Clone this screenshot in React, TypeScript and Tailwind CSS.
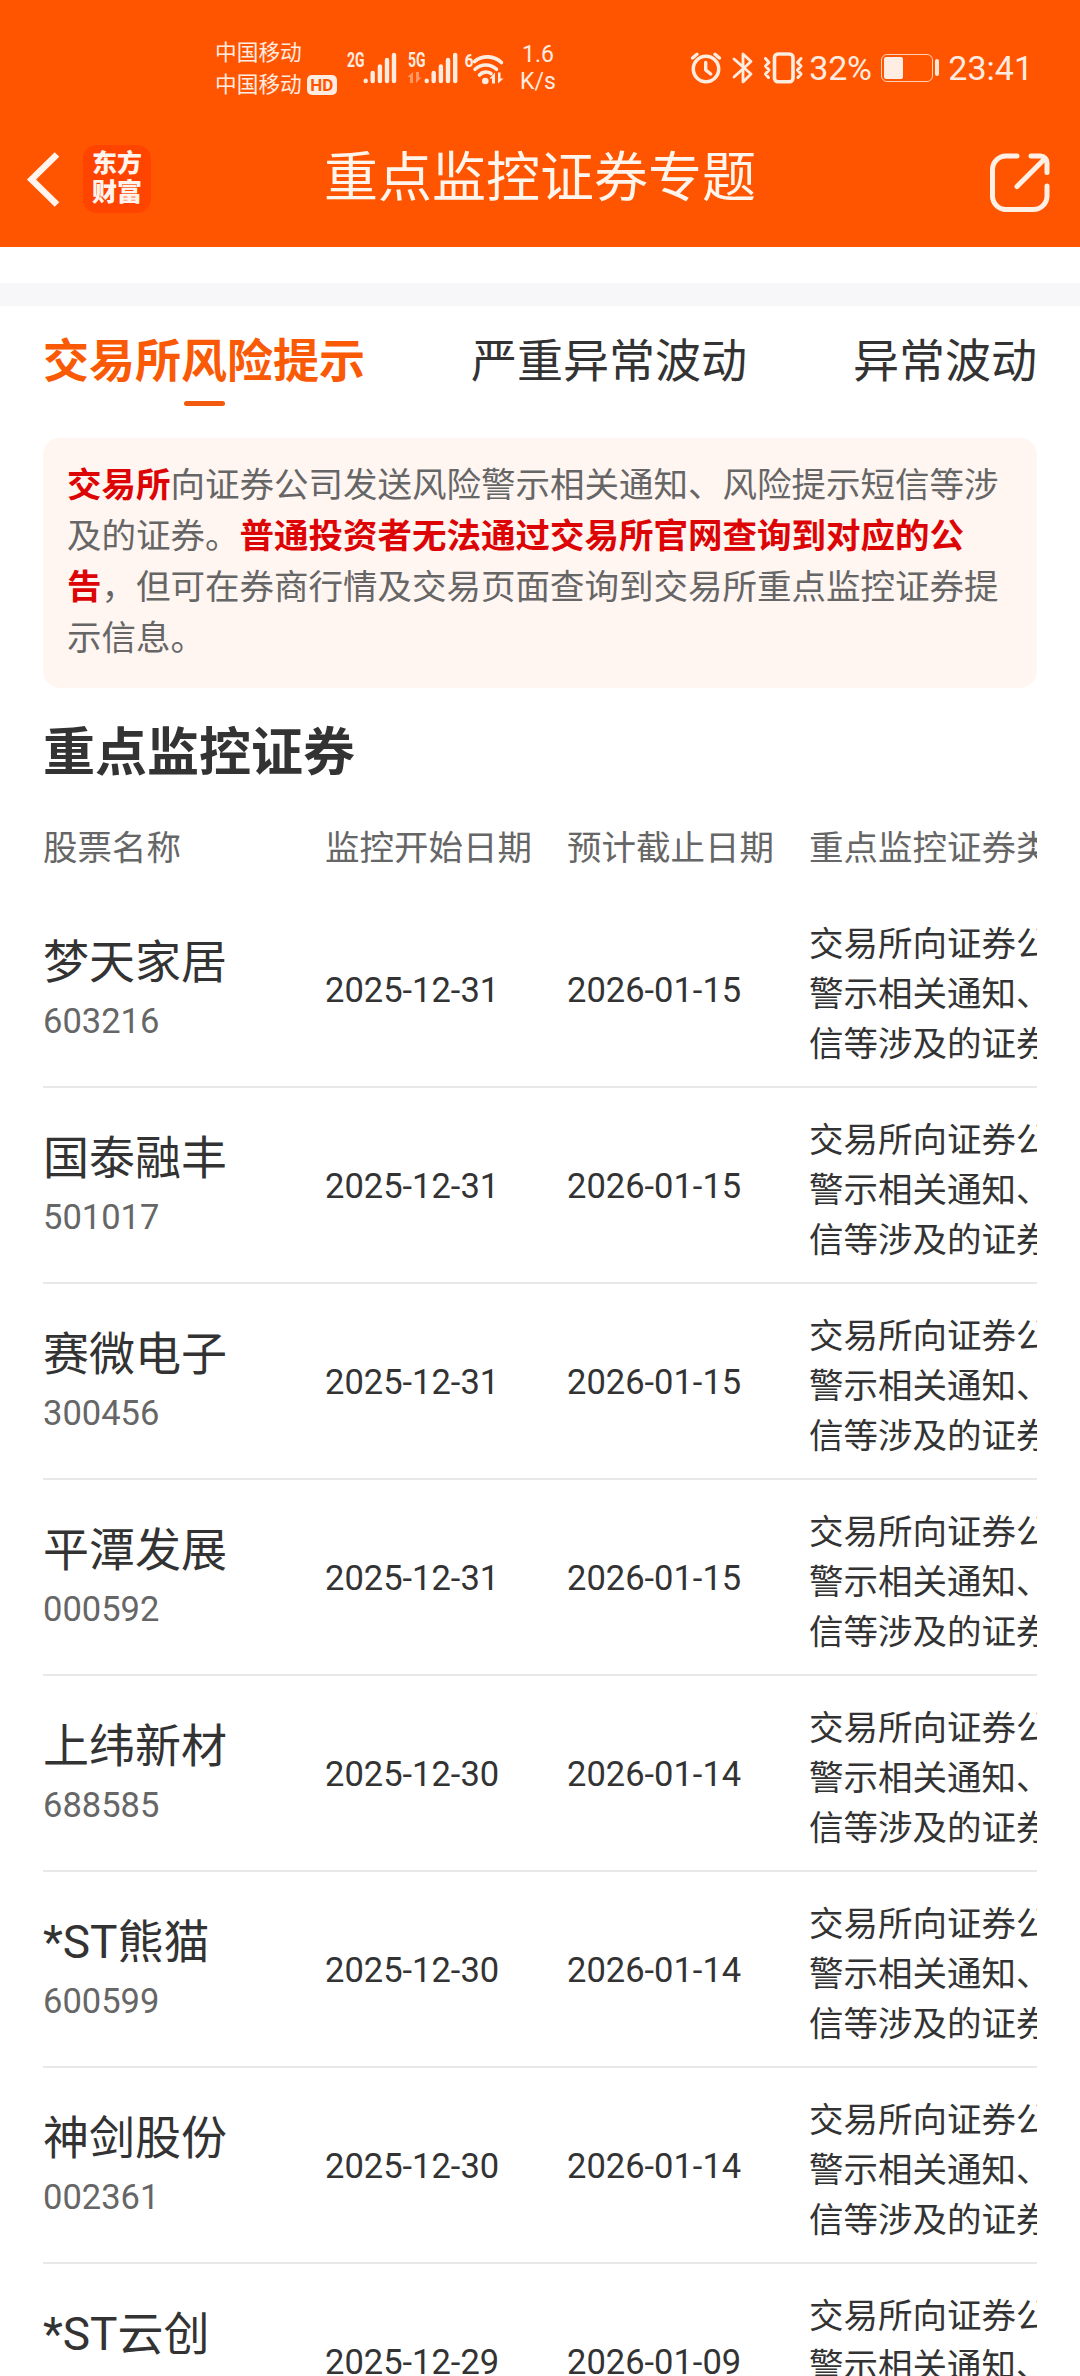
interface Stock {
  name: string;
  code: string;
  start: string;
  end: string;
}

const STOCKS: Stock[] = [
  { name: "梦天家居", code: "603216", start: "2025-12-31", end: "2026-01-15" },
  { name: "国泰融丰", code: "501017", start: "2025-12-31", end: "2026-01-15" },
  { name: "赛微电子", code: "300456", start: "2025-12-31", end: "2026-01-15" },
  { name: "平潭发展", code: "000592", start: "2025-12-31", end: "2026-01-15" },
  { name: "上纬新材", code: "688585", start: "2025-12-30", end: "2026-01-14" },
  { name: "*ST熊猫", code: "600599", start: "2025-12-30", end: "2026-01-14" },
  { name: "神剑股份", code: "002361", start: "2025-12-30", end: "2026-01-14" },
  { name: "*ST云创", code: "", start: "2025-12-29", end: "2026-01-09" },
];

const MONITOR_TYPE = "交易所向证券公司发送风险警示相关通知、风险提示短信等涉及的证券";

function SignalIcons() {
  return (
    <svg
      className="ml-[8px] h-[75px] w-[162px] shrink-0"
      viewBox="345 30 162 75"
      fill="none"
      stroke="currentColor"
      strokeLinecap="round"
    >
      <g fill="currentColor" stroke="none" fontFamily="Roboto" fontWeight="700" fontSize="20">
        <text x="347" y="67" textLength="17.5" lengthAdjust="spacingAndGlyphs">2G</text>
        <text x="408" y="67" textLength="17.5" lengthAdjust="spacingAndGlyphs">5G</text>
        <text x="464.5" y="66.5" fontSize="19" textLength="9" lengthAdjust="spacingAndGlyphs">6</text>
      </g>
      <path d="M365.7 80.7v.4M372.7 73v8M379.9 66.5v14.5M387 60v21M394 55v26" strokeWidth="4.4" />
      <path d="M426.7 80.7v.4M433.7 73v8M440.9 66.5v14.5M448 60v21M455.2 55v26" strokeWidth="4.4" />
      <path
        d="M407.5 77l5.5-5v11h-3v-6zM421.5 77.5l-5.5 5.5v-11h3v5.5z"
        fill="currentColor"
        stroke="none"
        opacity="0.45"
      />
      <g strokeWidth="3.6">
        <path d="M474.5 61.5a20.5 20.5 0 0 1 27 1" />
        <path d="M475 69.300a15.500 15.500 0 0 1 21.500 0" />
        <path d="M479.5 75a9 9 0 0 1 11.5-1.5" />
      </g>
      <circle cx="485.3" cy="81" r="3.3" fill="currentColor" stroke="none" />
      <path d="M489.5 78.5l5.500-6v11h-3v-5zM503.5 78.500l-5.500 5v-11h2.500v6z" fill="currentColor" stroke="none" />
    </svg>
  );
}

function DeviceIcons() {
  return (
    <svg
      className="h-[75px] w-[118px] shrink-0"
      viewBox="690 30 118 75"
      fill="none"
      stroke="currentColor"
      strokeLinecap="round"
      strokeLinejoin="round"
    >
      <circle cx="707" cy="69" r="12.7" strokeWidth="3.5" />
      <path d="M706.7 62.5v7.5l5 4" strokeWidth="3.4" />
      <path d="M693.5 58l4.5-3.7M720.5 58l-4.5-3.7" strokeWidth="3.4" />
      <path d="M735 59l17 15-8 8V54l8 7.5L735 77" strokeWidth="2.8" />
      <rect x="775.5" y="54" width="18.5" height="27.7" rx="3.5" strokeWidth="3.6" />
      <path
        d="M766.5 58.5l3.5 4-3.5 3.5 3.5 4-3.5 4 3 3.5M802 58.5l-3.5 4 3.5 3.5-3.5 4 3.5 4-3 3.5"
        strokeWidth="3"
      />
    </svg>
  );
}

function BatteryIcon() {
  return (
    <div className="ml-[9px] flex items-center gap-[2px]">
      <div className="h-[28px] w-[52px] rounded-[6px] border-[1.5px] border-[#ffd0b3] p-[2px]">
        <div className="h-[22px] w-[19px] rounded-[2px] bg-[#ffece2]" />
      </div>
      <div className="h-[17px] w-[4px] rounded-[2px] bg-[#ffe6d6]" />
    </div>
  );
}

function StatusBar() {
  return (
    <div className="flex h-[135px] items-start pt-[30px] text-[#ffece0]">
      <div className="ml-[215px] flex h-[75px] w-[122px] flex-col pt-[7px] text-[21.7px] leading-[32px]">
        <span>中国移动</span>
        <span className="flex items-center">
          中国移动
          <span className="ml-[5px] flex h-[20px] w-[30px] items-center justify-center rounded-[5px] bg-[#ffece0] text-[17px] leading-none font-bold text-[#ff5500]">
            HD
          </span>
        </span>
      </div>
      <SignalIcons />
      <div className="ml-[10px] mt-[11px] flex w-[42px] flex-col text-center text-[23px] leading-[27px]">
        <span>1.6</span>
        <span>K/s</span>
      </div>
      <div className="ml-auto mr-[47px] flex h-[75px] items-center">
        <DeviceIcons />
        <span className="ml-[2px] w-[63px] text-[34px] leading-[40px] tracking-[-0.3px]">32%</span>
        <BatteryIcon />
        <span className="ml-[9px] text-[34px] leading-[40px]">23:41</span>
      </div>
    </div>
  );
}

function TitleBar() {
  return (
    <div className="flex h-[112px] items-start justify-between pr-[28px] pl-[24px]">
      <div className="flex w-[200px] items-start">
        <svg
          className="mt-[14px] h-[60px] w-[36px]"
          viewBox="24 149 36 60"
          fill="none"
          stroke="#fff5ee"
          strokeWidth="6.5"
        >
          <path d="M57 154.500L31.500 179.500L57 204.500" />
        </svg>
        <div className="ml-[23px] mt-[10px] flex h-[68px] w-[68px] flex-col items-center rounded-[14px] bg-[#ff4400] pt-[4px] text-[25px] leading-[29px] font-black text-[#fff5ee]">
          <span>东方</span>
          <span>财富</span>
        </div>
      </div>
      <h1 className="mt-[9px] text-[54px] leading-[70px] text-[#fff5ec]">重点监控证券专题</h1>
      <div className="flex w-[196px] justify-end">
        <svg
          className="mt-[16px] h-[64px] w-[64px]"
          viewBox="988 151 64 64"
          fill="none"
          stroke="#fff0e6"
          strokeWidth="5"
          strokeLinecap="round"
          strokeLinejoin="round"
        >
          <path d="M1017 156H1006a13.500 13.500 0 0 0-13.500 13.500V196a13.500 13.500 0 0 0 13.500 13.500h27.500a13.500 13.500 0 0 0 13.500-13.500v-10" />
          <path d="M1031 156h9.500a6.500 6.500 0 0 1 6.500 6.500v10M1043.500 160L1017 186.500" />
        </svg>
      </div>
    </div>
  );
}

function Tabs() {
  return (
    <nav className="flex justify-between px-[43px] pt-[25px] text-[46px] leading-[61px] text-[#333333]">
      <div className="flex flex-col items-center font-bold text-[#fa5a05]">
        <span>交易所风险提示</span>
        <span className="mt-[9px] h-[5px] w-[41px] rounded-full bg-[#f35a0e]" />
      </div>
      <span>严重异常波动</span>
      <span>异常波动</span>
    </nav>
  );
}

function StockRow({ stock }: { stock: Stock }) {
  return (
    <div className="grid h-[196px] grid-cols-[282px_242px_242px_416px] items-center border-b-2 border-[#e8e8e8] text-[34.5px] text-[#333333]">
      <div className="flex flex-col gap-[6px] pb-[2px]">
        <span className="text-[46px] leading-[60px]">{stock.name}</span>
        <span className="h-[46px] leading-[46px] text-[#666666]">{stock.code}</span>
      </div>
      <span className="pt-[2px] leading-[40px]">{stock.start}</span>
      <span className="pt-[2px] leading-[40px]">{stock.end}</span>
      <p className="pt-[10px] leading-[50px]">{MONITOR_TYPE}</p>
    </div>
  );
}

export default function App() {
  return (
    <div
      lang="zh-CN"
      className="h-[2376px] w-[1080px] overflow-hidden bg-white font-[Roboto,'Noto_Sans_CJK_SC',sans-serif]"
    >
      <header className="h-[247px] bg-[#ff5500]">
        <StatusBar />
        <TitleBar />
      </header>
      <div className="mt-[36px] h-[23px] bg-[#f7f7fa]" />

      <Tabs />

      <main className="mx-[43px] mt-[32px]">
        <p className="h-[250px] rounded-[17px] bg-[#fff5f1] px-[24px] pt-[22px] text-[34.5px] leading-[51px] text-[#666666]">
          <b className="font-bold text-[#dc0404]">交易所</b>
          向证券公司发送风险警示相关通知、风险提示短信等涉及的证券。
          <b className="font-bold text-[#dc0404]">普通投资者无法通过交易所官网查询到对应的公告</b>
          ，但可在券商行情及交易页面查询到交易所重点监控证券提示信息。
        </p>

        <h2 className="mt-[36px] text-[52px] leading-[60px] font-bold text-[#333333]">重点监控证券</h2>

        <section className="mt-[44px] overflow-hidden">
          <div className="grid grid-cols-[282px_242px_242px_416px] pb-[24px] text-[34.5px] leading-[40px] text-[#666666]">
            <span>股票名称</span>
            <span>监控开始日期</span>
            <span>预计截止日期</span>
            <span>重点监控证券类型</span>
          </div>
          {STOCKS.map((stock) => (
            <StockRow key={stock.name} stock={stock} />
          ))}
        </section>
      </main>
    </div>
  );
}
